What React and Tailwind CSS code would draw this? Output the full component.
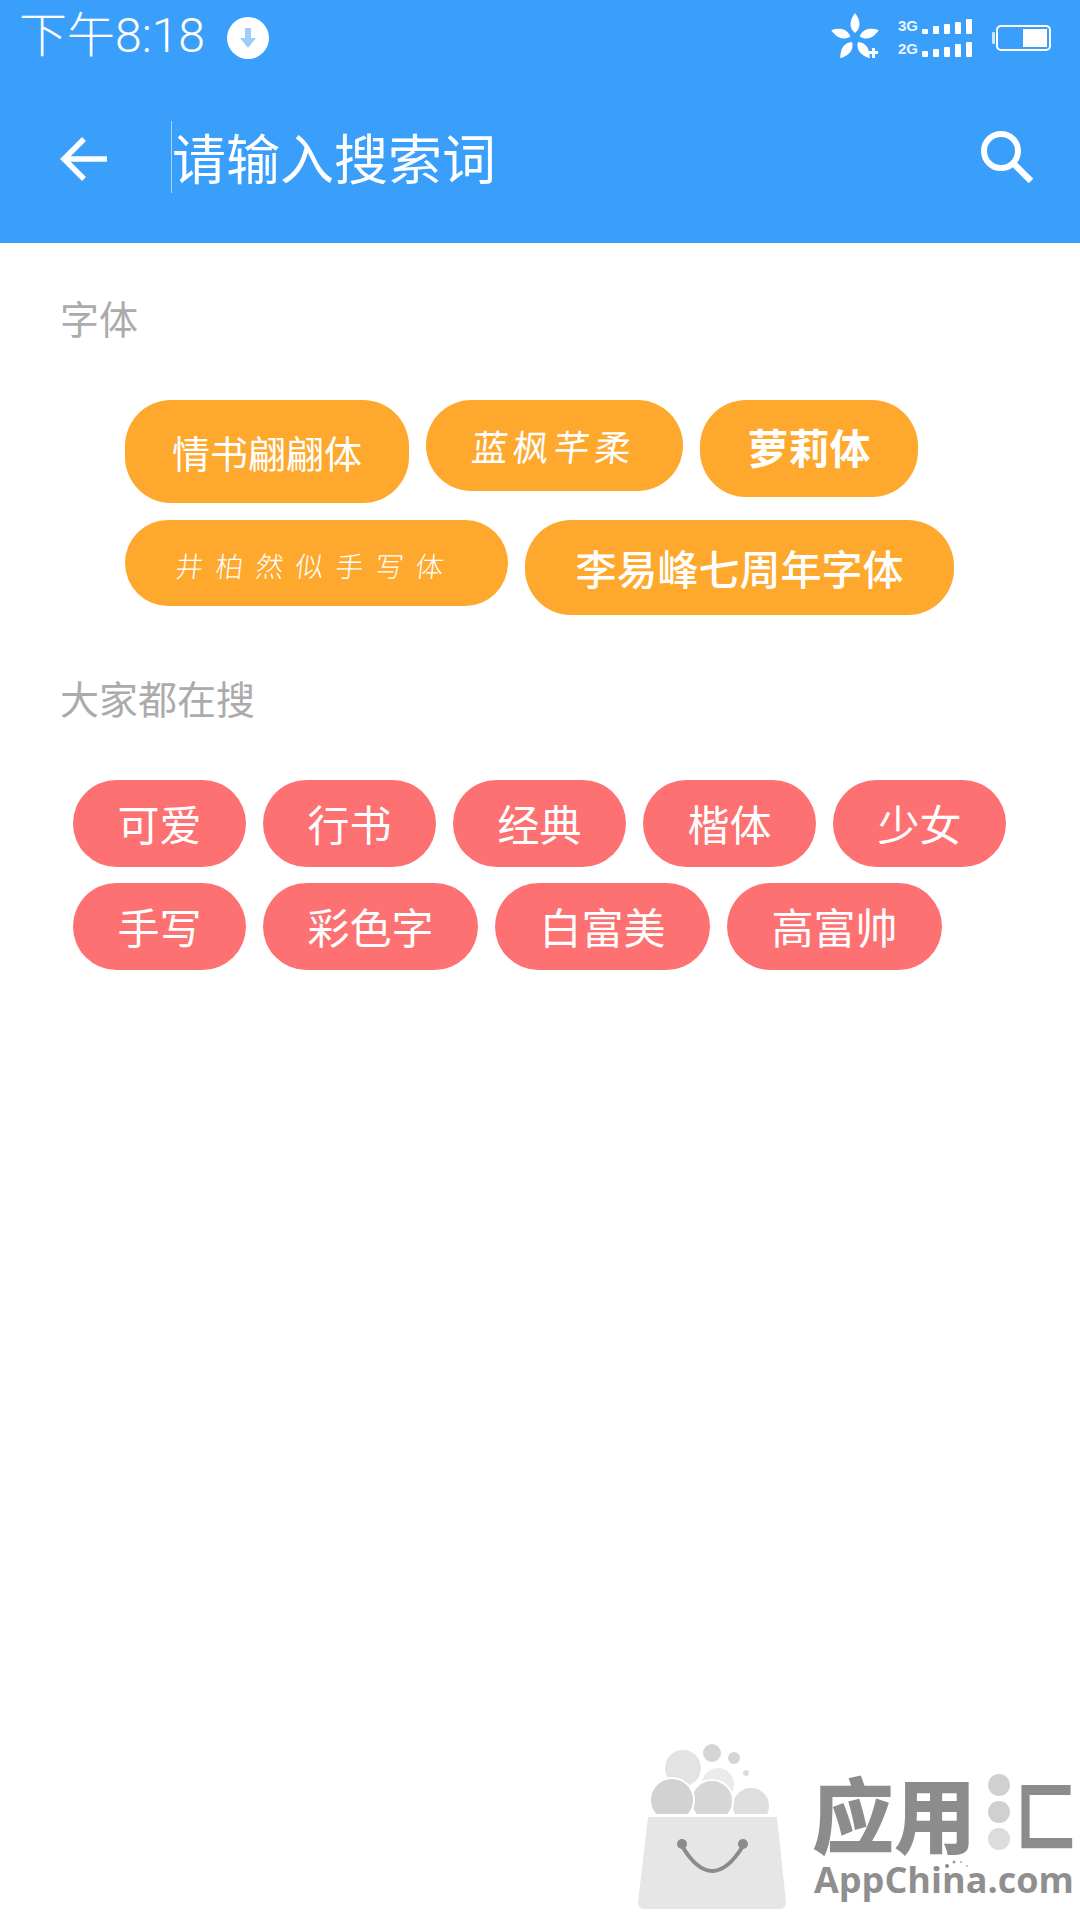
import React from "react";

const CJK = "font-['Noto_Sans_CJK_SC','Noto_Sans',sans-serif]";

/* ── Font sample chips: every one has its own size, like the preview images ── */
const FONT_ROWS = [
  [
    { label: "情书翩翩体", box: "w-[284px] h-[103px]", text: "text-[38px] font-normal" },
    { label: "蓝枫芊柔", box: "w-[257px] h-[91px]", text: "text-[36px] tracking-[5px] -skew-x-6 pb-[2px]" },
    { label: "萝莉体", box: "w-[218px] h-[97px]", text: "text-[41px] font-bold pb-[4px]" },
  ],
  [
    { label: "井柏然似手写体", box: "w-[383px] h-[86px]", text: "text-[28px] tracking-[12px] font-light -skew-x-6 pt-[4px]" },
    { label: "李易峰七周年字体", box: "w-[429px] h-[95px]", text: "text-[41px] font-medium" },
  ],
];

const HOT_ROWS = [
  ["可爱", "行书", "经典", "楷体", "少女"],
  ["手写", "彩色字", "白富美", "高富帅"],
];

const Bars = ({ label, heights }) => (
  <div className="flex h-[16px] items-end">
    <span className="w-[24px] text-[15px] leading-[14px] font-bold font-['Liberation_Sans',sans-serif] text-[#eaf5ff] self-center">
      {label}
    </span>
    <div className="flex items-end gap-[5px]">
      {heights.map((h, i) => (
        <div key={i} className="w-[6px] rounded-[1px] bg-white" style={{ height: h }} />
      ))}
    </div>
  </div>
);

const Flower = () => (
  <svg width="52" height="50" viewBox="0 0 52 50" className="mr-[16px]">
    <g transform="translate(25 25)" fill="#fff">
      {[0, 72, 144, 216, 288].map((r) => (
        <path key={r} transform={`rotate(${r})`} d="M0 -5 C-6 -10 -6 -17 0 -25 C6 -17 6 -10 0 -5 Z" />
      ))}
    </g>
    <path d="M39 38h3v-3h3v3h3v3h-3v4h-3v-4h-3z" fill="#fff" />
  </svg>
);

const Battery = () => (
  <svg width="62" height="28" viewBox="0 0 62 28" className="ml-[20px]">
    <rect x="0" y="8" width="3" height="12" rx="1" fill="#cfe6fd" />
    <rect x="5" y="2" width="53" height="24" rx="4" fill="none" stroke="#fff" strokeWidth="2" />
    <rect x="31" y="5" width="24" height="18" fill="#fff" />
  </svg>
);

const StatusBar = () => (
  <div className="flex h-[75px] items-center pl-[19px] pr-[26px] text-white">
    <span className="font-['Roboto','Noto_Sans_CJK_SC',sans-serif] -mt-[3px] text-[48px] leading-none font-light">
      下午8:18
    </span>
    <svg width="44" height="44" viewBox="0 0 44 44" className="ml-[21px]">
      <circle cx="22" cy="22" r="21" fill="#fff" />
      <path d="M19 12h6v10h5l-8 10-8-10h5z" fill="#9fcdfb" />
    </svg>
    <div className="ml-auto flex items-center">
      <Flower />
      <div className="flex flex-col gap-[7px]">
        <Bars label="3G" heights={[5, 8, 10, 12, 15]} />
        <Bars label="2G" heights={[6, 8, 10, 13, 15]} />
      </div>
      <Battery />
    </div>
  </div>
);

const Toolbar = () => (
  <div className="flex h-[168px] items-center text-white">
    <svg width="50" height="50" viewBox="0 0 50 50" className="ml-[60px]">
      <path d="M47 25H5M24 5 4 25l20 20" fill="none" stroke="#fff" strokeWidth="5.5" />
    </svg>
    <div className="ml-[61px] -mt-[4px] h-[72px] w-px bg-[#a9d4fd]" />
    <span className={`${CJK} -mt-[4px] text-[54px] leading-none`}>请输入搜索词</span>
    <svg width="56" height="56" viewBox="0 0 56 56" className="ml-auto mr-[45px] -mt-[4px]">
      <circle cx="22" cy="22" r="17" fill="none" stroke="#fff" strokeWidth="6" />
      <path d="M34 34 52 52" fill="none" stroke="#fff" strokeWidth="6.5" />
    </svg>
  </div>
);

const SectionLabel = ({ children, className }) => (
  <h2 className={`${CJK} ${className} pl-[60px] text-[39px] leading-[38px] font-normal text-[#ababab]`}>{children}</h2>
);

const Watermark = () => (
  <div className="pointer-events-none absolute left-[620px] top-[1720px] flex">
    <svg width="180" height="200" viewBox="0 0 180 200">
      <defs>
        <clipPath id="above-bag">
          <rect x="0" y="0" width="180" height="94" />
        </clipPath>
      </defs>
      <circle cx="63" cy="48" r="18" fill="#e3e3e3" />
      <circle cx="98" cy="64" r="16" fill="#ebebeb" />
      <circle cx="92" cy="33" r="9" fill="#d5d5d5" />
      <circle cx="114" cy="38" r="6" fill="#d5d5d5" />
      <circle cx="126" cy="53" r="3" fill="#dcdcdc" />
      <g clipPath="url(#above-bag)" stroke="#fff" strokeWidth="2">
        <circle cx="131" cy="86" r="19" fill="#dedede" />
        <circle cx="92" cy="81" r="21" fill="#d6d6d6" />
        <circle cx="52" cy="80" r="22" fill="#d2d2d2" />
      </g>
      <path d="M28 97H157L166 182Q166 189 160 189H24Q18 189 18 182Z" fill="#e6e6e6" />
      <path d="M62 126Q92 176 123 126" fill="none" stroke="#8b8b8b" strokeWidth="4" />
      <circle cx="62" cy="124" r="5" fill="#8b8b8b" />
      <circle cx="123" cy="124" r="5" fill="#8b8b8b" />
    </svg>
    <div className="relative ml-[12px] flex w-[262px] flex-col pt-[48px]">
      <div className={`${CJK} flex h-[88px] items-center whitespace-nowrap text-[82px] leading-none font-black text-[#8c8c8c]`}>
        <span>应用</span>
        <svg width="26" height="82" viewBox="0 0 26 82" className="ml-[10px] shrink-0">
          <circle cx="13" cy="14" r="11" fill="#d0d0d0" />
          <circle cx="13" cy="41" r="11" fill="#d0d0d0" />
          <circle cx="13" cy="68" r="11" fill="#dcdcdc" />
        </svg>
        <span className="ml-[4px] origin-center scale-y-125 text-[60px]">匚</span>
      </div>
      <svg width="26" height="10" viewBox="0 0 26 10" className="absolute left-[132px] top-[139px]">
        <circle cx="3" cy="7" r="2" fill="#8c8c8c" />
        <circle cx="10" cy="3" r="1.5" fill="#9a9a9a" />
        <circle cx="17" cy="3" r="1" fill="#aaaaaa" />
        <circle cx="23" cy="7" r="1" fill="#bbbbbb" />
      </svg>
      <span className="ml-[2px] mt-[4px] whitespace-nowrap text-[36px] leading-[40px] font-bold font-['Open_Sans',sans-serif] text-[#8f8f8f]">
        AppChina.com
      </span>
    </div>
  </div>
);

export default function App() {
  return (
    <div className="relative min-h-[1920px] w-[1080px] overflow-hidden bg-white">
      <header className="h-[243px] bg-[#3a9ffb]">
        <StatusBar />
        <Toolbar />
      </header>

      <main>
        <SectionLabel className="mt-[55px]">字体</SectionLabel>
        <div className="mt-[64px] flex flex-col gap-[17px] pl-[125px]">
          {FONT_ROWS.map((row, i) => (
            <div key={i} className="flex items-start gap-[17px]">
              {row.map((c) => (
                <div
                  key={c.label}
                  className={`${c.box} flex items-center justify-center rounded-[46px] bg-[#fea92d] text-white`}
                >
                  <span className={`${CJK} ${c.text} whitespace-nowrap leading-none`}>{c.label}</span>
                </div>
              ))}
            </div>
          ))}
        </div>

        <SectionLabel className="mt-[63px]">大家都在搜</SectionLabel>
        <div className="mt-[64px] flex flex-col gap-[16px] pl-[73px]">
          {HOT_ROWS.map((row, i) => (
            <div key={i} className="flex gap-[17px]">
              {row.map((t) => (
                <span
                  key={t}
                  className={`${CJK} flex h-[87px] items-center rounded-full bg-[#fe7172] px-[44.5px] pb-[2px] text-[42px] leading-none text-white`}
                >
                  {t}
                </span>
              ))}
            </div>
          ))}
        </div>
      </main>

      <Watermark />
    </div>
  );
}
